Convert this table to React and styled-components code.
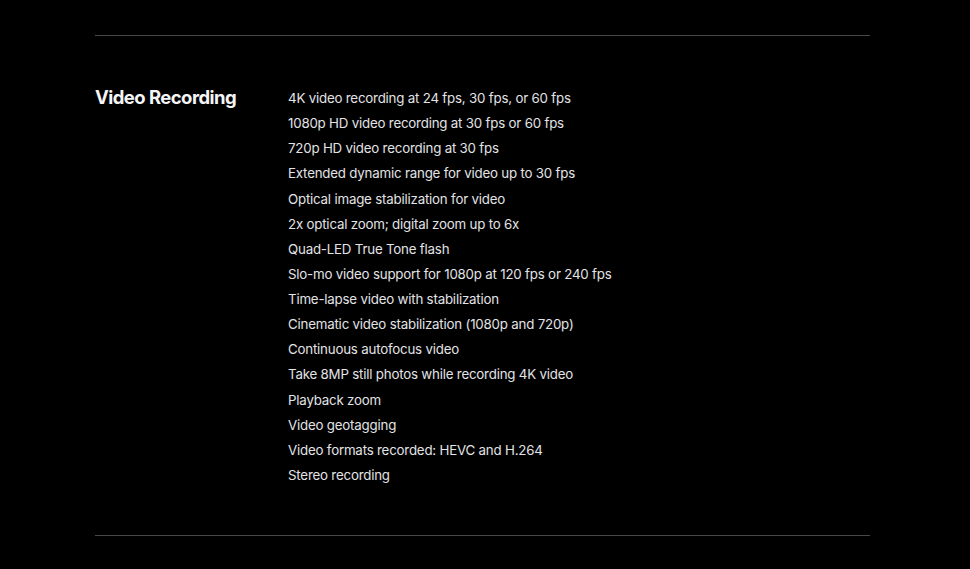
import React from "react";
import styled, { createGlobalStyle } from "styled-components";

const Global = createGlobalStyle`
  html, body { margin: 0; padding: 0; background: #000; }
  body { font-family: Inter, "Liberation Sans", Arial, sans-serif; -webkit-font-smoothing: antialiased; }
`;

const Page = styled.div`
  background: #000;
  min-height: 569px;
  padding: 35px 100px 0 95px;
  box-sizing: border-box;
`;

const Section = styled.section`
  border-top: 1px solid #48484a;
  border-bottom: 1px solid #48484a;
  display: grid;
  grid-template-columns: 193px 1fr;
  padding: 50px 0 47px;
`;

const Title = styled.h2`
  margin: 0;
  color: #f5f5f7;
  font-size: 18.5px;
  font-weight: 700;
  line-height: 22px;
  letter-spacing: -0.55px;
`;

const List = styled.ul`
  list-style: none;
  margin: 0;
  padding: 0;
`;

const Item = styled.li`
  color: #e3e3e6;
  font-size: 13.3px;
  line-height: 25.13px;
  letter-spacing: -0.2px;
`;

const items = [
  "4K video recording at 24 fps, 30 fps, or 60 fps",
  "1080p HD video recording at 30 fps or 60 fps",
  "720p HD video recording at 30 fps",
  "Extended dynamic range for video up to 30 fps",
  "Optical image stabilization for video",
  "2x optical zoom; digital zoom up to 6x",
  "Quad-LED True Tone flash",
  "Slo-mo video support for 1080p at 120 fps or 240 fps",
  "Time-lapse video with stabilization",
  "Cinematic video stabilization (1080p and 720p)",
  "Continuous autofocus video",
  "Take 8MP still photos while recording 4K video",
  "Playback zoom",
  "Video geotagging",
  "Video formats recorded: HEVC and H.264",
  "Stereo recording",
];

export default function App() {
  return (
    <>
      <Global />
      <Page>
        <Section>
          <Title>Video Recording</Title>
          <List>
            {items.map((t) => (
              <Item key={t}>{t}</Item>
            ))}
          </List>
        </Section>
      </Page>
    </>
  );
}
